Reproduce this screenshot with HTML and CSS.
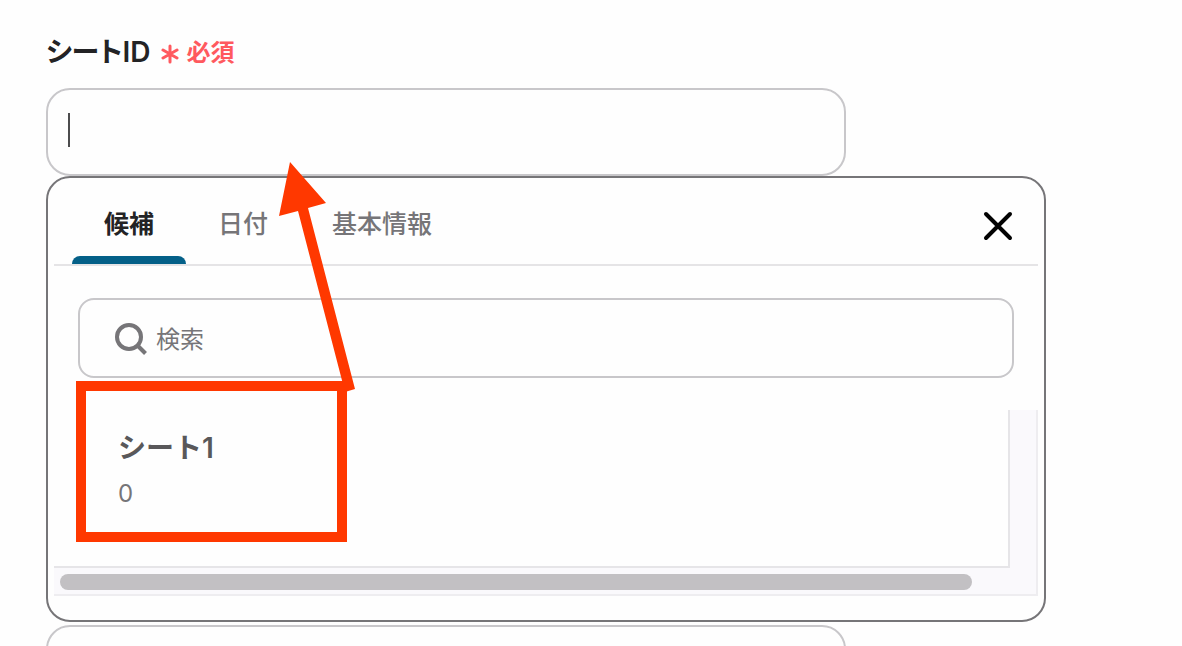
FILE: index.html
```html
<!DOCTYPE html>
<html lang="ja">
<head>
<meta charset="utf-8">
<meta name="viewport" content="width=device-width, initial-scale=1">
<title>シートID</title>
<link rel="stylesheet" href="styles.css">
</head>
<body>
<main class="form">
  <div class="field">
    <label class="field-label" for="sheet-id">
      <span class="field-name">シートID</span>
      <span class="required">
        <svg class="required-icon" viewBox="0 0 18 20" aria-hidden="true"><path d="M9 2v16M2 6l14 8M2 14l14-8"/></svg>
        必須
      </span>
    </label>
    <div class="input-wrap">
      <input class="text-input" id="sheet-id" type="text">
      <span class="caret"></span>
    </div>
  </div>

  <section class="panel">
    <div class="panel-head">
      <nav class="tabs">
        <button class="tab tab-active" type="button">候補</button>
        <button class="tab" type="button">日付</button>
        <button class="tab" type="button">基本情報</button>
      </nav>
      <button class="close" type="button" aria-label="閉じる">
        <svg class="close-icon" viewBox="0 0 32 32" aria-hidden="true"><path d="M4 4l24 24M28 4l-24 24"/></svg>
      </button>
    </div>

    <div class="search">
      <svg class="search-icon" viewBox="0 0 34 34" aria-hidden="true"><circle cx="15" cy="15" r="12"/><path d="M23.500 23.500l8 8"/></svg>
      <input class="search-input" type="search" placeholder="検索" aria-label="検索">
    </div>

    <div class="results">
      <div class="results-view">
        <button class="result" type="button">
          <span class="result-name">シート1</span>
          <span class="result-id">0</span>
        </button>
      </div>
      <div class="track-y"></div>
      <div class="track-x"><div class="thumb"></div></div>
    </div>

    <div class="highlight"></div>
    <svg class="arrow" viewBox="0 0 78 230" aria-hidden="true"><path d="M12 0L48 41L30 46L77 227L67 230L20 49L1 54Z"/></svg>
  </section>

  <input class="text-input" type="text" aria-label="次の項目">
</main>
</body>
</html>
```
FILE: styles.css
```css
* {
  box-sizing: border-box;
}

body {
  margin: 0;
  background: #fefefe;
  color: #232325;
  font-family: Inter, "Noto Sans CJK JP", sans-serif;
}

button,
input {
  margin: 0;
  padding: 0;
  border: 0;
  background: none;
  color: inherit;
  font: inherit;
}

.form {
  height: 100vh;
  max-width: 1092px;
  padding: 30px 46px 0;
  overflow: hidden;
}

.field-label {
  display: flex;
  align-items: center;
  gap: 10px;
  height: 40px;
  margin-bottom: 18px;
}

.field-name {
  font-size: 28px;
  font-weight: 600;
  font-feature-settings: "palt";
}

.required {
  display: flex;
  align-items: center;
  gap: 8px;
  color: #ff595e;
  font-size: 24px;
  font-weight: 600;
}

.required-icon {
  width: 18px;
  height: 20px;
  margin-top: 8px;
  fill: none;
  stroke: currentColor;
  stroke-width: 3;
  stroke-linecap: round;
}

.input-wrap {
  position: relative;
  display: flex;
}

.text-input {
  width: 80%;
  height: 88px;
  padding: 0 20px;
  border: 2px solid #c8c7ca;
  border-radius: 24px;
  outline: 0;
  font-size: 28px;
}

.caret {
  position: absolute;
  top: 25px;
  left: 22px;
  width: 2px;
  height: 34px;
  background: #4c4c4e;
}

.panel {
  position: relative;
  margin-bottom: 3px;
  padding: 0 6px 24px;
  border: 2px solid #767578;
  border-radius: 24px;
  background: #fefefe;
}

.panel-head {
  display: flex;
  justify-content: space-between;
  height: 88px;
  padding: 0 24px 0 18px;
  border-bottom: 2px solid #e5e4e6;
}

.tabs {
  display: flex;
}

.tab {
  padding: 10px 32px 0;
  border-bottom: 8px solid transparent;
  color: #767578;
  font-size: 25px;
  font-weight: 500;
}

.tab-active {
  position: relative;
  color: #232325;
  font-weight: 700;
}

.tab-active::after {
  content: "";
  position: absolute;
  right: 0;
  bottom: -8px;
  left: 0;
  height: 8px;
  border-radius: 8px 8px 0 0;
  background: #046088;
}

.close {
  display: flex;
  align-items: center;
  padding-top: 10px;
}

.close-icon {
  width: 32px;
  height: 32px;
  fill: none;
  stroke: #020202;
  stroke-width: 4;
  stroke-linecap: round;
}

.search {
  display: flex;
  align-items: center;
  gap: 8px;
  height: 80px;
  margin: 32px 24px;
  padding: 2px 34px 0;
  border: 2px solid #c8c7ca;
  border-radius: 16px;
}

.search-icon {
  flex: none;
  width: 34px;
  height: 34px;
  fill: none;
  stroke: #767578;
  stroke-width: 4;
}

.search-input {
  flex: 1;
  min-width: 0;
  outline: 0;
  font-size: 24px;
}

.search-input::placeholder {
  color: #767578;
  opacity: 1;
}

.results {
  display: grid;
  grid-template-columns: 1fr 28px;
  background: #faf9fc;
}

.results-view {
  height: 158px;
  border-right: 2px solid #e6e5e8;
  border-bottom: 2px solid #e6e5e8;
  background: #fefefe;
}

.result {
  display: flex;
  flex-direction: column;
  gap: 8px;
  width: 100%;
  padding: 18px 64px 16px;
  text-align: left;
}

.result-name {
  color: #59585a;
  font-size: 28px;
  font-weight: 600;
  line-height: 40px;
}

.result-id {
  color: #767578;
  font-size: 24px;
  line-height: 36px;
}

.track-y {
  border-right: 2px solid #eeedf0;
}

.track-x {
  grid-column: 1 / -1;
  height: 28px;
  padding: 6px;
  border-right: 2px solid #eeedf0;
  border-bottom: 2px solid #eeedf0;
}

.thumb {
  width: 94%;
  height: 16px;
  border-radius: 8px;
  background: #c2c0c3;
}

.highlight {
  position: absolute;
  top: 203px;
  left: 28px;
  width: 271px;
  height: 161px;
  border: 10px solid #ff3800;
}

.arrow {
  position: absolute;
  top: -16px;
  left: 230px;
  width: 78px;
  height: 230px;
  fill: #ff3800;
}
```
